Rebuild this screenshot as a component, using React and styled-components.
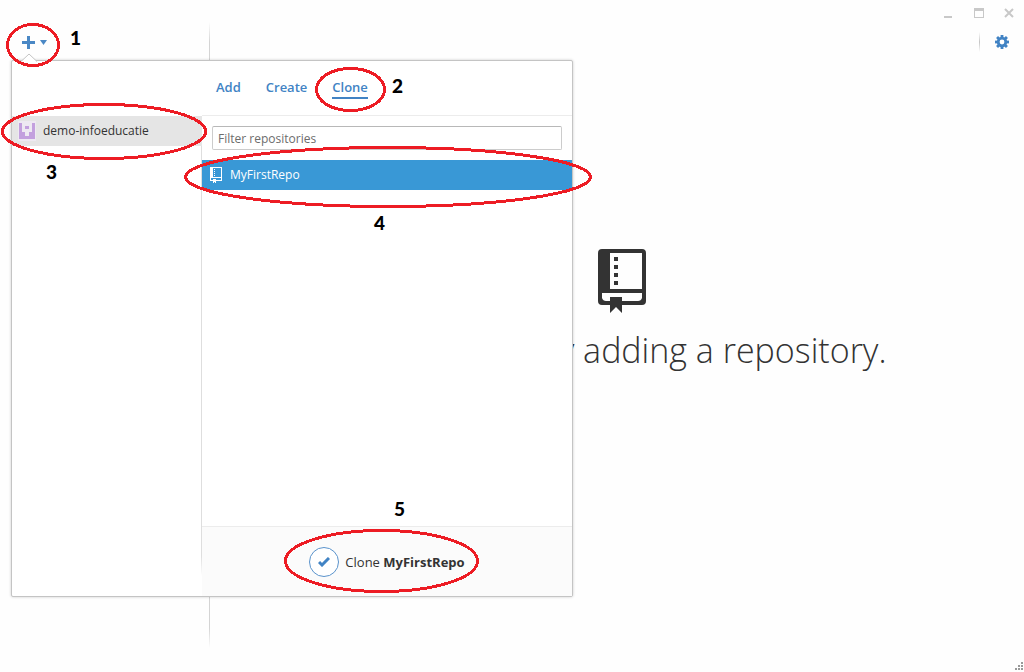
import React from "react";
import styled, { createGlobalStyle } from "styled-components";

const Global = createGlobalStyle`
  *, *::before, *::after { box-sizing: border-box; }
  body { margin: 0; background: #fefefe; color: #333; font: 12px/16px "Open Sans", "Noto Sans", sans-serif; }
  button, input { font: inherit; color: inherit; }
  button { padding: 0; border: 0; background: none; cursor: pointer; }
  ul, h1, p { margin: 0; padding: 0; list-style: none; }
  svg { display: block; }
`;

const Window = styled.div`
  position: relative;
  min-height: 100vh;
  display: grid;
  grid-template-columns: 210px 1fr;
`;

const Sidebar = styled.aside`
  padding: 22px 0 24px;
  display: flex;
  justify-content: space-between;
`;

const Fade = styled.div`
  width: 1px;
  align-self: stretch;
  background: linear-gradient(transparent, #d4d4d4 20px, #d4d4d4 calc(100% - 20px), transparent);
`;

const AddButton = styled.button`
  display: flex;
  align-items: center;
  gap: 5px;
  height: 40px;
  margin-left: 22px;
  color: #4183c4;
`;

const Main = styled.main`
  display: flex;
  flex-direction: column;
`;

const TitleBar = styled.header`
  display: flex;
  justify-content: flex-end;
  align-items: flex-start;
  gap: 20px;
  height: 26px;
  padding: 8px 10px 0 0;
`;

const Toolbar = styled.div`
  display: flex;
  justify-content: flex-end;
  align-items: center;
  gap: 15px;
  height: 32px;
  padding-right: 15px;
`;

const ToolbarRule = styled.div`
  width: 1px;
  height: 20px;
  background: linear-gradient(transparent, #c4c4c4, transparent);
`;

const Welcome = styled.section`
  display: flex;
  flex-direction: column;
  align-items: center;
  gap: 12px;
  padding: 191px 0 0 10px;
`;

const Headline = styled.h1`
  font-size: 34px;
  line-height: 50px;
  font-weight: 300;
  white-space: nowrap;
  color: #333;
`;

const Grip = styled.div`
  position: absolute;
  right: 1px;
  bottom: 2px;
`;

const Popover = styled.section`
  position: absolute;
  left: 11px;
  top: 60px;
  width: 562px;
  display: grid;
  grid-template-columns: 190px 1fr;
  border: 1px solid #c4c4c4;
  border-radius: 2px;
  background: #fff;
  box-shadow: 0 0 3px rgba(0, 0, 0, 0.2);
`;

const Pointer = styled.div`
  position: absolute;
  left: 8px;
  top: -8px;
`;

const Accounts = styled.ul`
  && { padding-top: 55px; }
  background: linear-gradient(transparent 55px, #dedede 75px, #dedede calc(100% - 40px), transparent calc(100% - 20px))
    right / 1px 100% no-repeat;
`;

const Account = styled.button`
  display: flex;
  align-items: center;
  gap: 7px;
  width: 100%;
  height: 30px;
  && { padding-left: 6px; }
  background: #e5e5e5;
`;

const Panel = styled.div`
  display: flex;
  flex-direction: column;
  height: 535px;
`;

const Tabs = styled.nav`
  display: flex;
  align-items: center;
  gap: 25px;
  height: 55px;
  padding-left: 14px;
  border-bottom: 1px solid #ececec;
`;

const Tab = styled.button`
  height: 22px;
  font-size: 13px;
  line-height: 20px;
  font-weight: 600;
  color: #4183c4;
  border-bottom: 2px solid ${(p) => (p.$active ? "#4183c4" : "transparent")};
`;

const Filter = styled.input`
  height: 24px;
  margin: 10px;
  padding: 0 5px;
  border: 1px solid #ccc;
  border-top-color: #b8b8b8;
  border-radius: 2px;
  background: #fff;
  outline: 0;
  &::placeholder { color: #6c6c6c; opacity: 1; }
`;

const Repos = styled.ul`
  flex: 1;
`;

const Repo = styled.button`
  display: flex;
  align-items: center;
  gap: 8px;
  width: 100%;
  height: 30px;
  padding-left: 8px;
  background: #3998d6;
  color: #fff;
`;

const Footer = styled.footer`
  display: flex;
  justify-content: center;
  align-items: center;
  height: 70px;
  border-top: 1px solid #ececec;
  background: #fbfbfb;
`;

const CloneButton = styled.button`
  display: flex;
  align-items: center;
  gap: 6px;
  font-size: 13px;
`;

const CheckCircle = styled.span`
  display: grid;
  place-items: center;
  width: 30px;
  height: 30px;
  border: 1px solid #5a93cc;
  border-radius: 50%;
  background: #fff;
`;

const Ring = styled.svg`
  position: absolute;
  left: ${(p) => p.$x}px;
  top: ${(p) => p.$y}px;
  pointer-events: none;
`;

const StepNumber = styled.span`
  position: absolute;
  left: ${(p) => p.$x}px;
  top: ${(p) => p.$y}px;
  font: 900 19px/24px Lato, sans-serif;
  color: #000;
`;

const steps = [
  { n: 1, x: 6, y: 23, w: 54, h: 44, nx: 70, ny: 26 },
  { n: 2, x: 315, y: 67, w: 71, h: 45, nx: 392, ny: 74 },
  { n: 3, x: 1, y: 103, w: 206, h: 57, nx: 46, ny: 160 },
  { n: 4, x: 184, y: 146, w: 408, h: 62, nx: 374, ny: 211 },
  { n: 5, x: 284, y: 529, w: 195, h: 64, nx: 394, ny: 497 },
];

function Step({ n, x, y, w, h, nx, ny }) {
  return (
    <>
      <Ring $x={x} $y={y} width={w} height={h} aria-hidden="true">
        <ellipse cx={w / 2} cy={h / 2} rx={w / 2 - 1.5} ry={h / 2 - 1.5} fill="none" stroke="#ed1c24" strokeWidth="3" shapeRendering="crispEdges" />
      </Ring>
      <StepNumber $x={nx} $y={ny}>{n}</StepNumber>
    </>
  );
}

function BigRepoIcon() {
  return (
    <svg width="48" height="64" viewBox="0 0 48 64" aria-hidden="true">
      <path fill="#333" fillRule="evenodd" d="M4 0H44Q48 0 48 4V52Q48 56 44 56H24V64L18 58L12 64V56H4Q0 56 0 52V4Q0 0 4 0ZM12 4V40H44V4ZM4 44V49Q5 52 8 52H12V48H24V52H40Q43 52 44 49V44Z" />
      <path fill="#333" d="M16 8h4v4h-4zM16 16h4v4h-4zM16 24h4v4h-4zM16 32h4v4h-4z" />
    </svg>
  );
}

function SmallRepoIcon() {
  return (
    <svg width="12" height="16" viewBox="0 0 12 16" shapeRendering="crispEdges" aria-hidden="true">
      <path fill="#fff" fillRule="evenodd" d="M0 0H12V14H6V16H5V15H4V16H3V14H0ZM3 1V10H11V1ZM1 11V13H3V12H6V13H11V11Z" />
      <path fill="#fff" d="M4 2h1v1H4zM4 4h1v1H4zM4 6h1v1H4zM4 8h1v1H4z" />
    </svg>
  );
}

function Avatar() {
  return (
    <svg width="18" height="20" viewBox="0 0 18 20" shapeRendering="crispEdges" aria-hidden="true">
      <path fill="#eee9f2" d="M0 0h18v20H0z" />
      <path fill="#c3a0de" d="M1 2h3v9h3v4h4v-4h3V2h3v16H1zM7 5h4v3H7z" />
    </svg>
  );
}

function Gear() {
  return (
    <svg width="14" height="14" viewBox="0 0 14 14" aria-hidden="true">
      <g fill="#4183c4">
        {[0, 45, 90, 135].map((a) => (
          <rect key={a} x="5.6" y="0" width="2.8" height="14" transform={`rotate(${a} 7 7)`} />
        ))}
        <circle cx="7" cy="7" r="5.2" />
      </g>
      <circle cx="7" cy="7" r="2.4" fill="#fff" />
    </svg>
  );
}

export default function App() {
  return (
    <>
      <Global />
      <Window>
        <Sidebar>
          <AddButton aria-label="Add repository">
            <svg width="13" height="13" viewBox="0 0 13 13" aria-hidden="true"><path fill="#4a88c5" d="M5 0h3v5h5v3H8v5H5V8H0V5h5z" /></svg>
            <svg width="7" height="5" viewBox="0 0 7 5" aria-hidden="true"><path fill="#4a88c5" d="M0 0h7L3.500 5z" /></svg>
          </AddButton>
          <Fade />
        </Sidebar>
        <Main>
          <TitleBar>
            <button aria-label="Minimize"><svg width="10" height="10"><path fill="#c8c8c8" d="M0 8h8v2H0z" /></svg></button>
            <button aria-label="Maximize"><svg width="10" height="10"><path fill="#c8c8c8" fillRule="evenodd" d="M0 0h10v10H0zM1 3v6h8V3z" /></svg></button>
            <button aria-label="Close"><svg width="10" height="10"><path stroke="#c8c8c8" strokeWidth="2" d="M1 1l8 8M9 1l-8 8" /></svg></button>
          </TitleBar>
          <Toolbar>
            <ToolbarRule />
            <button aria-label="Settings"><Gear /></button>
          </Toolbar>
          <Welcome>
            <BigRepoIcon />
            <Headline>Get started by adding a repository.</Headline>
          </Welcome>
        </Main>
        <Grip>
          <svg width="8" height="8" aria-hidden="true"><path fill="#999" d="M6 0h2v2H6zM3 3h2v2H3zM6 3h2v2H6zM0 6h2v2H0zM3 6h2v2H3zM6 6h2v2H6z" /></svg>
        </Grip>
        <Popover>
          <Pointer>
            <svg width="18" height="9" aria-hidden="true"><path fill="#fff" stroke="#c4c4c4" d="M1 8.500L9 1L17 8.500" /></svg>
          </Pointer>
          <Accounts>
            <li>
              <Account><Avatar />demo-infoeducatie</Account>
            </li>
          </Accounts>
          <Panel>
            <Tabs>
              <Tab>Add</Tab>
              <Tab>Create</Tab>
              <Tab $active>Clone</Tab>
            </Tabs>
            <Filter aria-label="Filter repositories" placeholder="Filter repositories" />
            <Repos>
              <li><Repo><SmallRepoIcon />MyFirstRepo</Repo></li>
            </Repos>
            <Footer>
              <CloneButton>
                <CheckCircle>
                  <svg width="12" height="10" viewBox="0 0 12 10" aria-hidden="true"><path fill="none" stroke="#4183c4" strokeWidth="3" d="M1 5l3 3l7-7" /></svg>
                </CheckCircle>
                <span>Clone <strong>MyFirstRepo</strong></span>
              </CloneButton>
            </Footer>
          </Panel>
        </Popover>
        {steps.map((s) => <Step key={s.n} {...s} />)}
      </Window>
    </>
  );
}
